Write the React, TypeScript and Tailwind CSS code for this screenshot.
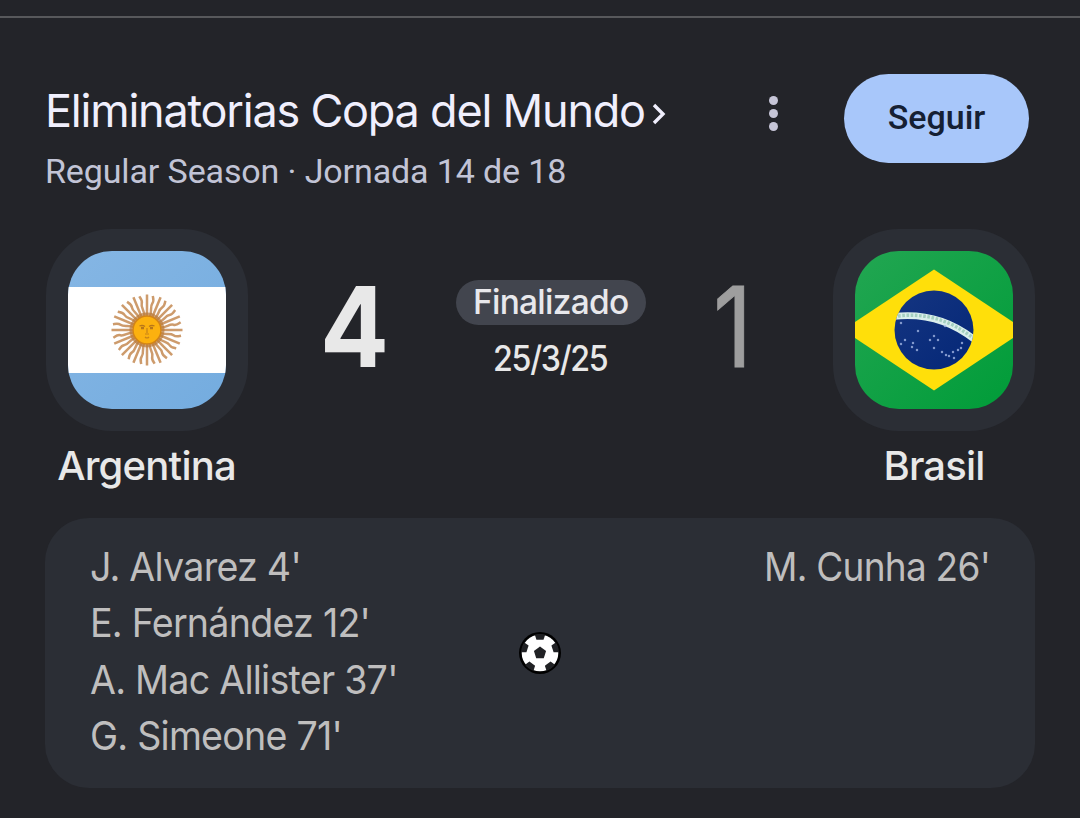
import type { ReactNode } from "react";

const homeScorers = ["J. Alvarez 4'", "E. Fernández 12'", "A. Mac Allister 37'", "G. Simeone 71'"];
const awayScorers = ["M. Cunha 26'"];

// star positions on the blue disc, in flag coordinates
const stars = [
  [46, 72], [50, 89], [46, 93], [63, 80], [58, 92], [57, 96], [62, 99], [79, 85], [75, 89],
  [83, 89], [79, 97], [87, 101], [91, 104], [98, 101], [103, 99], [99, 107], [106, 97], [94, 105],
  [90, 75], [107, 92],
];

function pentagon(cx: number, cy: number, r: number) {
  return Array.from({ length: 5 }, (_, i) => {
    const a = ((i * 72 - 90) * Math.PI) / 180;
    return `${(cx + r * Math.cos(a)).toFixed(2)},${(cy + r * Math.sin(a)).toFixed(2)}`;
  }).join(" ");
}

function ArgentinaFlag() {
  return (
    <svg viewBox="0 0 158 158" className="h-full w-full">
      <defs>
        <linearGradient id="sky" x1="0" y1="0" x2="1" y2="1">
          <stop offset="0" stopColor="#85b6e4" />
          <stop offset="1" stopColor="#74acdf" />
        </linearGradient>
      </defs>
      <rect width="158" height="158" fill="url(#sky)" />
      <rect y="36" width="158" height="86" fill="#fff" />
      <g transform="translate(79 79)" fill="none" stroke="#c48a52">
        {Array.from({ length: 32 }, (_, i) => (
          <path
            key={i}
            transform={`rotate(${i * 11.25})`}
            strokeWidth={2.5}
            opacity={0.85}
            d={i % 2 ? "M0 -13 C2 -19 -2 -23 0 -27 C1.5 -30 0 -32 -1 -34.5" : "M0 -13 L0 -35.5"}
          />
        ))}
        <circle r="16" stroke="#b97a3a" strokeWidth="3" strokeOpacity=".7" />
        <circle r="14" fill="#fcb10f" stroke="#d28418" strokeWidth="1.5" />
        <g stroke="#b8771a" strokeWidth="1.2">
          <path d="M-7.5 -4 Q-4.5 -5.5 -2 -3.5 M7.5 -4 Q4.5 -5.5 2 -3.5" />
          <path d="M-6 -2 H-3 M6 -2 H3" strokeWidth="2.4" />
          <path d="M0 -2 V3 M-2 4 H2 M-2 7 Q0 9 2 7" opacity=".8" />
        </g>
      </g>
    </svg>
  );
}

function BrazilFlag() {
  return (
    <svg viewBox="0 0 158 158" className="h-full w-full">
      <defs>
        <linearGradient id="field" x1="0" y1="0" x2="1" y2="1">
          <stop offset="0" stopColor="#22a652" />
          <stop offset="1" stopColor="#009c38" />
        </linearGradient>
        <linearGradient id="globe" x1="0" y1="0" x2="1" y2="1">
          <stop offset="0" stopColor="#153581" />
          <stop offset="1" stopColor="#042777" />
        </linearGradient>
        <clipPath id="disc">
          <circle cx="79" cy="79" r="39.5" />
        </clipPath>
      </defs>
      <rect width="158" height="158" fill="url(#field)" />
      <path d="M79 18.5 L170 79 L79 139.5 L-12 79 Z" fill="#ffdf0a" />
      <circle cx="79" cy="79" r="39.5" fill="url(#globe)" />
      <g clipPath="url(#disc)">
        <path d="M38 65.5 Q84 60 120 89" fill="none" stroke="#dbefec" strokeWidth="6.6" />
        <path d="M43 65 Q84 60 118 87" fill="none" stroke="#7fbba4" strokeWidth="3.4" strokeDasharray="2.6 1.6" opacity=".6" />
        {stars.map(([x, y]) => (
          <circle key={`${x}-${y}`} cx={x} cy={y} r="1.25" fill="#a9bce8" opacity=".75" />
        ))}
      </g>
    </svg>
  );
}

function BallIcon() {
  return (
    <svg viewBox="0 0 42 42" className="h-[42px] w-[42px]">
      <defs>
        <clipPath id="ball">
          <circle cx="21" cy="21" r="19" />
        </clipPath>
      </defs>
      <circle cx="21" cy="21" r="21" fill="#000" />
      <circle cx="21" cy="21" r="18.3" fill="#fff" />
      <g clipPath="url(#ball)" fill="#202124">
        <polygon points={pentagon(21, 21, 6.4)} />
        {[0, 72, 144, 216, 288].map((a) => (
          <polygon key={a} points={pentagon(21, 3, 6)} transform={`rotate(${a} 21 21)`} />
        ))}
      </g>
    </svg>
  );
}

interface TeamProps {
  name: string;
  children: ReactNode;
}

function Team({ name, children }: TeamProps) {
  return (
    <div className="flex flex-col items-center">
      <div className="flex h-[202px] w-[202px] items-center justify-center rounded-[66px] bg-[#2b2e35]">
        <div className="h-[158px] w-[158px] overflow-hidden rounded-[44px]">{children}</div>
      </div>
      <span className="mt-[10px] text-[40px] leading-[50px] font-medium tracking-[-0.8px] whitespace-nowrap text-[#e8e8e8]">
        {name}
      </span>
    </div>
  );
}

export default function App() {
  return (
    <div className="h-[818px] w-[1080px] overflow-hidden bg-[#232429] font-['Inter','Liberation_Sans',sans-serif]">
      <div className="h-[18px] border-b-2 border-[#57585b]" />

      <header className="flex h-[211px] items-start pt-14 pr-[51px] pl-[45px]">
        <div className="flex-1">
          <div className="flex h-[74px] items-center gap-[7px] text-[#f0effd]">
            <h1 className="text-[45px] leading-[74px] tracking-[-1.22px] whitespace-nowrap">Eliminatorias Copa del Mundo</h1>
            <svg viewBox="0 0 14 22" className="mt-1.5 h-[22px] w-[14px]" fill="none" stroke="currentColor" strokeWidth="3.4">
              <path d="M2 2 L11 11 L2 20" />
            </svg>
          </div>
          <p className="-mt-0.5 font-['Roboto',sans-serif] text-[34px] leading-[50px] tracking-[-0.12px] whitespace-nowrap text-[#c2c4d6]">
            Regular Season · Jornada 14 de 18
          </p>
        </div>
        <button className="mt-[22px] mr-[66px] flex flex-col gap-1" aria-label="Más opciones">
          <span className="h-[9px] w-[9px] rounded-full bg-[#c6c5d7]" />
          <span className="h-[9px] w-[9px] rounded-full bg-[#c6c5d7]" />
          <span className="h-[9px] w-[9px] rounded-full bg-[#c6c5d7]" />
        </button>
        <button className="h-[89px] w-[185px] rounded-full bg-[#a8c7fa] pb-0.5 font-['Roboto',sans-serif] text-[34px] font-medium text-[#152033]">
          Seguir
        </button>
      </header>

      <section className="flex h-[289px] justify-between pr-[45px] pl-[45.5px]">
        <Team name="Argentina">
          <ArgentinaFlag />
        </Team>
        <div className="flex flex-1 items-start justify-between pr-[81px] pl-[72px]">
          <span className="mt-[42px] origin-left scale-x-[0.92] text-[111px] leading-[111px] font-bold text-[#e8e8e8]">4</span>
          <div className="mt-[51px] flex flex-col items-center">
            <span className="flex h-[45px] w-[190px] items-center justify-center rounded-full bg-[#42454e] text-[33.5px] font-medium tracking-[-0.75px] text-[#e8e8ec]">
              Finalizado
            </span>
            <span className="mt-3 scale-x-[0.92] text-[35px] leading-[42px] font-medium tracking-[-1.4px] text-[#e8e8e8]">25/3/25</span>
          </div>
          <span className="mt-[42px] origin-right scale-x-[0.86] text-[111px] leading-[111px] text-[#9e9e9e] [-webkit-text-stroke:1px_#9e9e9e]">1</span>
        </div>
        <Team name="Brasil">
          <BrazilFlag />
        </Team>
      </section>

      <section className="mx-[45px] grid h-[270px] grid-cols-[1fr_42px_1fr] rounded-[44px] bg-[#2b2e35] px-[45px] pt-[21px] text-[40px] leading-[56.3px] tracking-[-0.8px] text-[#bfbebe]">
        <ul className="origin-left scale-x-[0.94]">
          {homeScorers.map((scorer) => (
            <li key={scorer} className="whitespace-nowrap">{scorer}</li>
          ))}
        </ul>
        <div className="flex h-[228px] items-center">
          <BallIcon />
        </div>
        <ul className="origin-right scale-x-[0.925] text-right">
          {awayScorers.map((scorer) => (
            <li key={scorer} className="whitespace-nowrap">{scorer}</li>
          ))}
        </ul>
      </section>
    </div>
  );
}
